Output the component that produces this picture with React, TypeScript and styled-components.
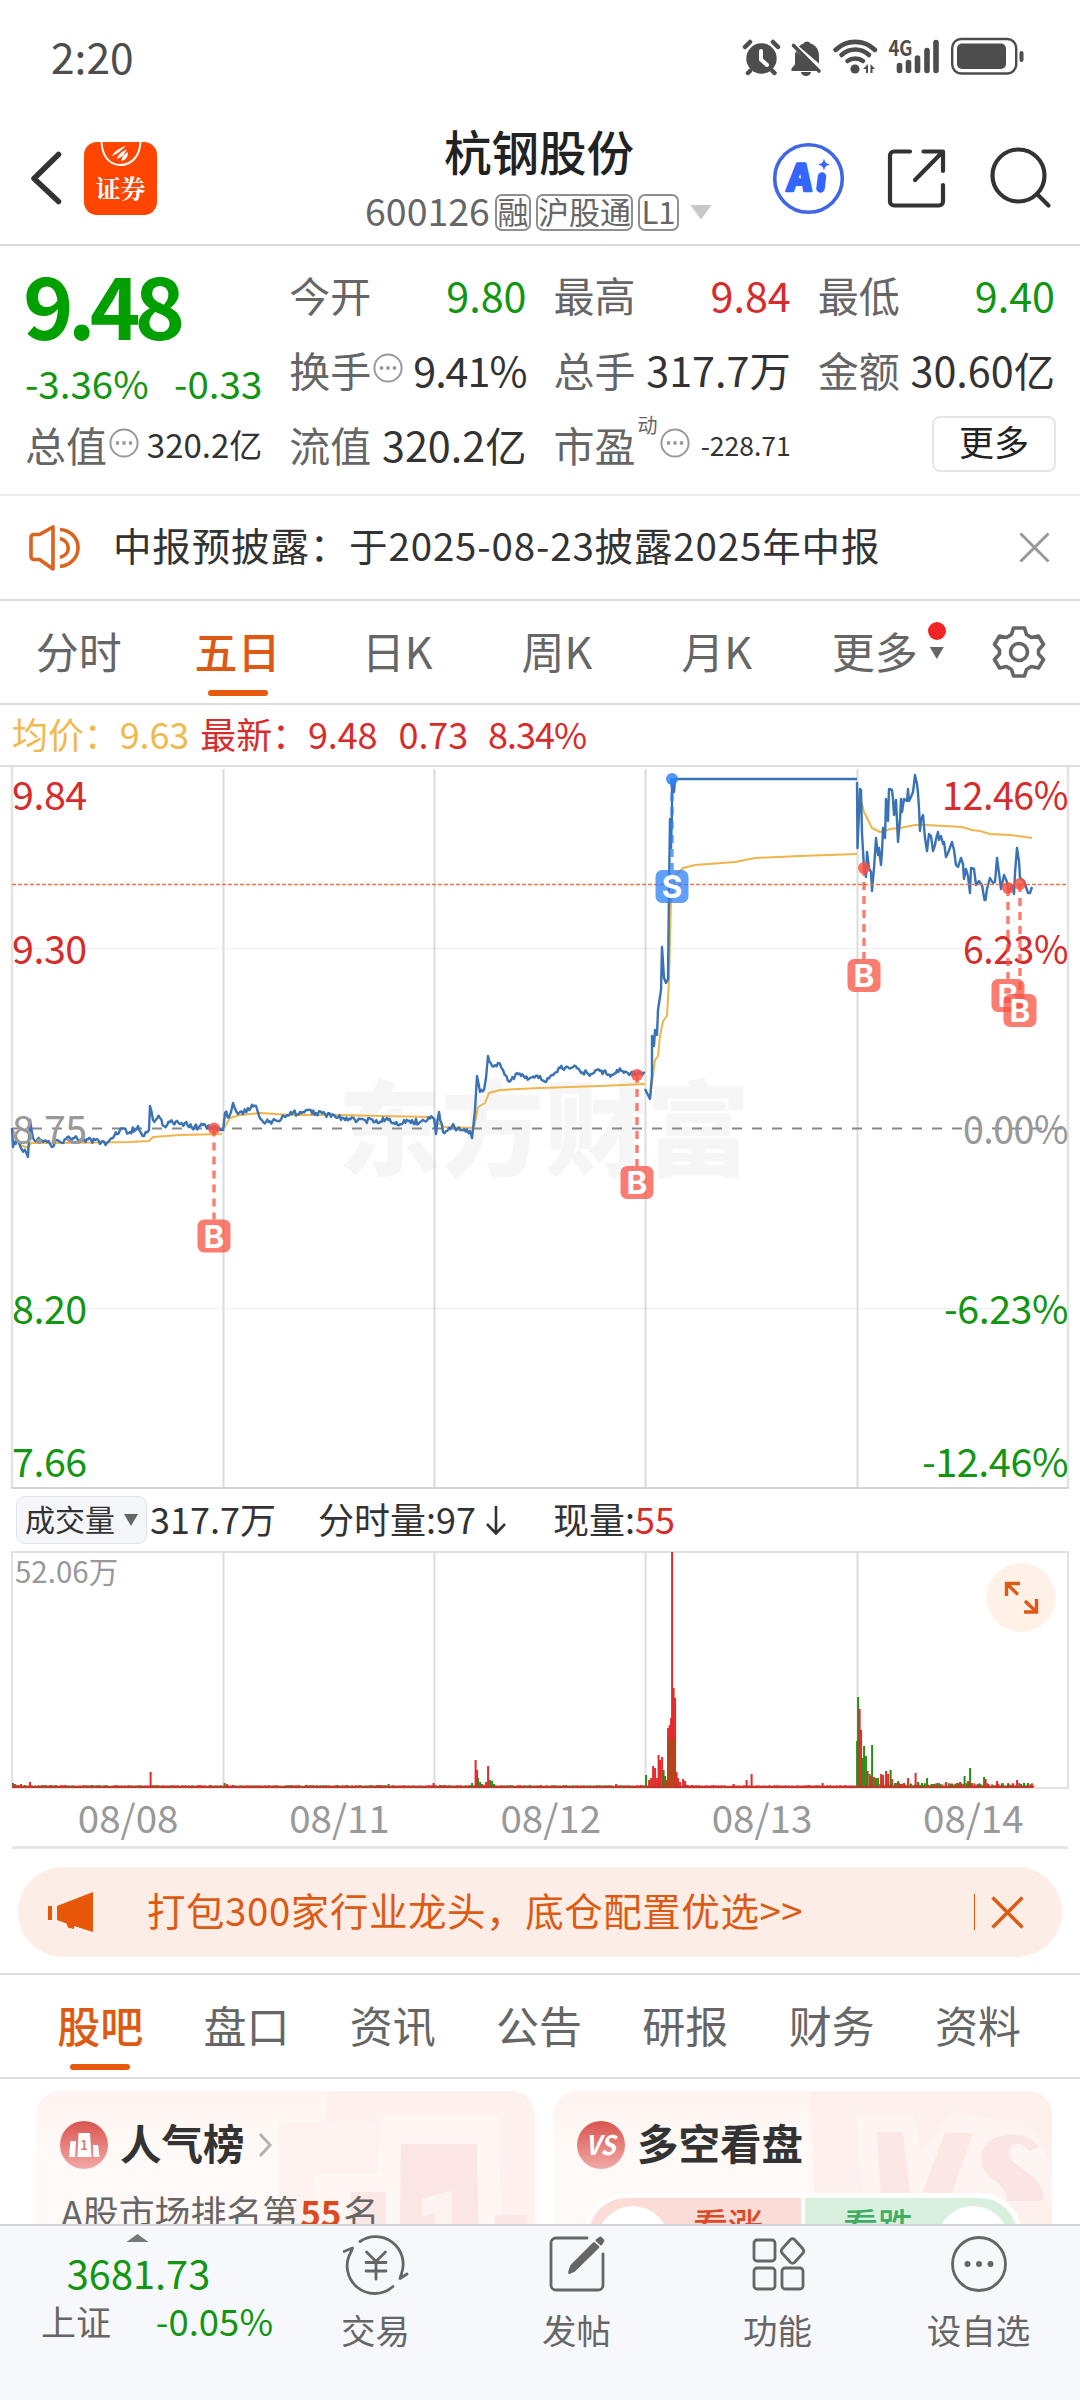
import React from "react";
import styled, { createGlobalStyle, css } from "styled-components";

const RED = "#d62c2c";
const GREEN = "#129612";
const ORANGE = "#dd5a14";
const DARK = "#333333";
const GRAY = "#666666";
const LIGHT = "#999999";

const FONT = `"Noto Sans CJK SC", "Noto Sans", sans-serif`;

const Global = createGlobalStyle`
  * { box-sizing: border-box; }
  body { margin: 0; background: #fff; }
  svg { display: block; flex: none; }
`;

const Screen = styled.div`
  width: 1080px;
  height: 2400px;
  overflow: hidden;
  display: flex;
  flex-direction: column;
  background: #fff;
  color: ${DARK};
  font-family: ${FONT};
  white-space: nowrap;
`;

/* ---------- status bar ---------- */

const StatusBar = styled.div`
  height: 115px;
  flex: none;
  display: flex;
  align-items: flex-start;
  justify-content: space-between;
  padding: 0 50px 0 51px;
`;

const Clock = styled.span`
  margin-top: 26px;
  font-size: 42.500px;
  line-height: 60px;
  color: #4d4d4d;
`;

const StatusIcons = () => (
  <svg width="300" height="115" viewBox="730 0 300 115" fill="#4d4d4d">
    <circle cx="761.5" cy="58.5" r="15.2" />
    <path d="M745 47l5-5M778 47l-5-5M750 71l-2 2M772.500 71l2 2" stroke="#4d4d4d" strokeWidth="4.500" strokeLinecap="round" />
    <path d="M761 51v8.500l6 5.500" stroke="#fff" strokeWidth="4" strokeLinecap="round" fill="none" />
    <path d="M796 51l23 20H791.500v-2.500l3.500-4v-8c0-2 .3-4 1-5.500zM799 46.500c1.500-1.600 3-2.600 4.500-3a4 4 0 0 1 7 0c6 1.800 8.500 7 8.500 12.500v7.500z" />
    <path d="M793.500 45.500L819 71" stroke="#4d4d4d" strokeWidth="3.600" strokeLinecap="round" />
    <path d="M801 72h10a5 4 0 0 1-10 0z" />
    <path d="M835.500 50a28 28 0 0 1 39.500 0M841.500 55a20 20 0 0 1 27.500 0M847.500 61a13 13 0 0 1 15.500 0" fill="none" stroke="#4d4d4d" strokeWidth="4.600" strokeLinecap="round" />
    <circle cx="855" cy="69" r="4.600" />
    <path d="M868 64v9h-2v-4h-3zM870.500 64l4.500 5h-2.500v4h-2z" />
    <g stroke="#4d4d4d" strokeWidth="5.600" strokeLinecap="round">
      <path d="M899.500 65.500v5M908.500 62.500v8M917.500 58v12.500M927 50.500v20M936 42.500v28" />
    </g>
    <text x="888.500" y="56" fontSize="21.500" fontWeight="700" textLength="24" lengthAdjust="spacingAndGlyphs" fontFamily={FONT}>4G</text>
    <rect x="952.200" y="39" width="64" height="34.500" rx="9" fill="none" stroke="#4d4d4d" strokeWidth="2.400" />
    <rect x="957" y="43.500" width="49" height="25.500" rx="5" />
    <rect x="1019.500" y="51" width="4" height="11" rx="2" />
  </svg>
);

/* ---------- title bar ---------- */

const Header = styled.header`
  height: 131px;
  flex: none;
  display: grid;
  grid-template-columns: 300px 1fr 300px;
  border-bottom: 2px solid #d9d9d9;
`;

const HeaderLeft = styled.div`
  display: flex;
  align-items: flex-start;
  padding: 27px 0 0 30px;
  gap: 21px;
`;

const BrokerLogo = styled.div`
  width: 73px;
  height: 73px;
  border-radius: 13px;
  background: #ff4500;
  color: #fff;
  display: flex;
  flex-direction: column;
  align-items: center;
  overflow: hidden;
`;

const BrokerName = styled.span`
  font-size: 25px;
  line-height: 36px;
  font-weight: 700;
  font-family: "Noto Serif CJK SC", ${FONT};
`;

const HeaderTitle = styled.div`
  display: flex;
  flex-direction: column;
  align-items: center;
`;

const StockName = styled.h1`
  margin: 5px 2px 0 0;
  font-size: 47.5px;
  line-height: 62px;
  font-weight: 500;
  color: #222;
`;

const CodeRow = styled.div`
  margin: 8px 3px 0 0;
  display: flex;
  align-items: center;
  height: 44px;
  gap: 5px;
  color: ${GRAY};
`;

const Code = styled.span`
  font-size: 37.5px;
  line-height: 44px;
  margin-top: -5px;
`;

const Tag = styled.span<{ $pad?: number }>`
  height: 37px;
  padding: 0 ${(p) => p.$pad ?? 0.5}px;
  border: 2px solid #8f8f8f;
  border-radius: 7px;
  font-size: 31px;
  line-height: 29px;
`;

const DownCaret = styled.span<{ $w: number; $h: number; $color: string; $up?: boolean }>`
  width: ${(p) => p.$w}px;
  height: ${(p) => p.$h}px;
  background: ${(p) => p.$color};
  clip-path: ${(p) => (p.$up ? "polygon(50% 0, 100% 100%, 0 100%)" : "polygon(0 0, 100% 0, 50% 100%)")};
`;

const CodeCaret = styled(DownCaret)`
  margin-left: 6px;
`;

const HeaderActions = styled.div`
  display: flex;
  justify-content: flex-end;
  padding: 24px 27px 0 0;
`;

const ActionIcons = () => (
  <svg width="284" height="80" viewBox="769 139 284 80" fill="none" stroke="#333" strokeWidth="4.200" strokeLinecap="round" strokeLinejoin="round">
    <circle cx="808.500" cy="178.500" r="33.800" stroke="#4066e6" strokeWidth="3.600" />
    <text transform="translate(786.500 190.500) skewX(-5)" fontSize="37" fontWeight="900" fill="#3366ff" stroke="#3366ff" strokeWidth="2.500" fontFamily={FONT}>A</text>
    <path d="M822 176.500l-1.500 12" stroke="#3366ff" strokeWidth="8.500" />
    <path d="M824 158.500c1 4 2 5 6 6-4 1-5 2-6 6-1-4-2-5-6-6 4-1 5-2 6-6z" fill="#3366ff" stroke="none" />
    <path d="M910 151.500h-16a4 4 0 0 0-4 4v46a4 4 0 0 0 4 4h45a4 4 0 0 0 4-4V185M923.500 151.500H943V171M942 152.500l-27 27.500" />
    <circle cx="1018.500" cy="175.500" r="26" />
    <path d="M1037 194l11.500 11.500" />
  </svg>
);

/* ---------- quote ---------- */

const Quote = styled.section`
  height: 250px;
  flex: none;
  padding: 13px 25px 0;
  display: grid;
  grid-template-columns: repeat(4, 1fr);
  grid-template-rows: repeat(3, 75px);
  column-gap: 27px;
  border-bottom: 2px solid #ececec;
`;

const PriceCell = styled.div`
  grid-row: span 2;
  display: flex;
  flex-direction: column;
  color: ${GREEN};
`;

const Price = styled.span`
  margin: 2px 0 0 -2px;
  font-size: 86px;
  line-height: 84px;
  font-weight: 700;
  letter-spacing: -6px;
  color: #00a000;
`;

const Changes = styled.div`
  margin-top: 8px;
  display: flex;
  justify-content: space-between;
  font-size: 38.500px;
  line-height: 58px;
`;

const Stat = styled.div`
  display: flex;
  align-items: center;
  height: 70px;
`;

const StatLabel = styled.span`
  font-size: 41px;
  color: ${GRAY};
`;

const StatValue = styled.span<{ $size?: number; $color?: string; $ls?: number }>`
  margin-left: auto;
  font-size: ${(p) => p.$size ?? 41.3}px;
  letter-spacing: ${(p) => p.$ls ?? 0}px;
  color: ${(p) => p.$color ?? DARK};
`;

const Super = styled.sup`
  align-self: flex-start;
  margin: -2px 0 0 2px;
  font-size: 20px;
  line-height: 36px;
  color: ${GRAY};
`;

const MoreButton = styled.button`
  margin-left: auto;
  width: 124px;
  height: 56px;
  margin-right: -1px;
  padding: 0 0 6px;
  border: 2px solid #e6e6e6;
  border-radius: 8px;
  background: #fff;
  font-family: inherit;
  font-size: 35px;
  line-height: 44px;
  color: #222;
`;

const InfoSvg = styled.svg`
  margin: -2px 0 0 2px;
`;

const InfoDots = () => (
  <InfoSvg width="30" height="30" viewBox="0 0 30 30">
    <circle cx="15" cy="15" r="13.600" fill="none" stroke="#999" strokeWidth="2" />
    <circle cx="8.500" cy="15" r="1.900" fill="#999" />
    <circle cx="15" cy="15" r="1.900" fill="#999" />
    <circle cx="21.500" cy="15" r="1.900" fill="#999" />
  </InfoSvg>
);

/* ---------- notice ---------- */

const Notice = styled.section`
  height: 105px;
  flex: none;
  display: flex;
  align-items: center;
  padding: 0 30px 0 29px;
  border-bottom: 2px solid #dcdcdc;
`;

const NoticeText = styled.span`
  margin: -7px auto 0 31px;
  font-size: 38.5px;
  letter-spacing: 0.85px;
`;

/* ---------- period tabs ---------- */

const Tabs = styled.nav<{ $pad: number }>`
  height: 104px;
  flex: none;
  display: flex;
  padding: 0 ${(p) => p.$pad}px;
  border-bottom: 2px solid #dcdcdc;
`;

const Tab = styled.div<{ $active?: boolean; $w: number }>`
  position: relative;
  width: ${(p) => p.$w}px;
  flex: none;
  display: flex;
  justify-content: center;
  font-size: 43px;
  line-height: 99px;
  color: ${(p) => (p.$active ? ORANGE : GRAY)};
  ${(p) =>
    p.$active &&
    css`
      font-weight: 500;
      &::after {
        content: "";
        position: absolute;
        left: calc(50% - 30px);
        bottom: 7px;
        width: 60px;
        height: 6px;
        border-radius: 3px;
        background: #e55a0c;
      }
    `}
`;

const MoreMark = styled.span`
  display: flex;
  flex-direction: column;
  align-items: center;
  width: 18px;
  margin-left: 10px;
  padding-top: 21px;
  gap: 7px;
`;

const RedDot = styled.i`
  width: 18px;
  height: 18px;
  border-radius: 50%;
  background: #f02424;
`;

const GearSvg = styled.svg`
  margin-top: 24px;
`;

const Gear = () => (
  <GearSvg width="54" height="54" viewBox="-27 -27 54 54" fill="none" stroke="#666" strokeWidth="3.600" strokeLinejoin="round">
    <path d="M-5.500-24h11l2 6.500 5 3 7-1.500 5 8.500-5 5.500v4l5 5.500-5 8.500-7-1.500-5 3-2 6.500h-11l-2-6.500-5-3-7 1.500-5-8.500 5-5.500v-4l-5-5.500 5-8.500 7 1.500 5-3z" />
    <circle r="8.500" />
  </GearSvg>
);

/* ---------- price chart ---------- */

const Legend = styled.div`
  height: 62px;
  flex: none;
  display: flex;
  align-items: center;
  padding: 0 0 4px 12px;
  font-size: 36px;
  color: ${RED};
  border-bottom: 2px solid #e0e0e0;
`;

const LegendItem = styled.span<{ $ml?: number; $color?: string; $ls?: number }>`
  margin-left: ${(p) => p.$ml ?? 0}px;
  letter-spacing: ${(p) => p.$ls ?? -0.1}px;
  color: ${(p) => p.$color ?? RED};
`;

type Pt = [number, number];

const seeded = (seed: number) => {
  let s = seed;
  return () => {
    s = (s * 16807) % 2147483647;
    return s / 2147483647;
  };
};

/* Fills each leg between two quotes with minute ticks. */
const ticks = (pts: Pt[], amp: number, seed: number): Pt[] => {
  const rnd = seeded(seed);
  const out: Pt[] = [pts[0]];
  for (let i = 1; i < pts.length; i++) {
    const [x0, y0] = pts[i - 1];
    const [x1, y1] = pts[i];
    const n = Math.floor((x1 - x0) / 1.3);
    for (let k = 1; k < n; k++) {
      const t = k / n;
      out.push([x0 + (x1 - x0) * t, y0 + (y1 - y0) * t + (rnd() - 0.5) * 2 * amp]);
    }
    out.push([x1, y1]);
  }
  return out;
};

const toPath = (pts: Pt[]) => "M" + pts.map(([x, y]) => `${x.toFixed(1)} ${y.toFixed(1)}`).join("L");

const PRICE_DAYS: { pts: Pt[]; amp: number }[] = [
  { amp: 3, pts: [[12, 1128], [13, 1147], [17, 1140], [22, 1150], [26, 1152], [28, 1157], [30, 1120], [33, 1138], [40, 1140], [50, 1144], [52, 1147], [57, 1140], [62, 1143], [70, 1138], [80, 1140], [95, 1140], [100, 1144], [107, 1143], [113, 1138], [120, 1130], [130, 1132], [138, 1126], [144, 1136], [149, 1130], [150, 1106], [153, 1120], [160, 1118], [164, 1126], [170, 1122], [180, 1124], [185, 1123], [192, 1128], [200, 1126], [214, 1127], [223, 1130]] },
  { amp: 2.8, pts: [[223, 1131], [225, 1113], [229, 1117], [231, 1112], [233, 1103], [238, 1114], [243, 1114], [248, 1108], [256, 1106], [259, 1116], [266, 1122], [278, 1121], [284, 1116], [292, 1114], [300, 1112], [308, 1110], [316, 1113], [325, 1114], [334, 1115], [345, 1120], [360, 1119], [375, 1122], [387, 1118], [395, 1124], [408, 1121], [420, 1122], [434, 1118]] },
  { amp: 2.6, pts: [[434, 1118], [436, 1134], [439, 1112], [443, 1132], [452, 1126], [460, 1130], [470, 1131], [472, 1138], [475, 1110], [477, 1076], [480, 1092], [484, 1090], [486, 1078], [488, 1056], [492, 1066], [498, 1063], [503, 1070], [508, 1081], [514, 1079], [517, 1073], [525, 1078], [540, 1076], [546, 1082], [552, 1075], [560, 1068], [573, 1067], [580, 1071], [591, 1074], [600, 1071], [613, 1075], [617, 1070], [628, 1073], [645, 1073]] },
  { amp: 0, pts: [[645, 1089], [650, 1099], [652, 1075], [652, 1036], [654, 1046], [655, 1030], [657, 1035], [658, 1010], [661, 990], [662, 947], [664, 978], [666, 983], [668, 979], [669, 890], [670, 819], [671, 848], [672, 810], [672, 779], [674, 792], [675, 779], [857, 779]] },
  { amp: 0, pts: [[857, 782], [857.5, 848], [860, 789], [861, 790], [862, 833], [864, 868], [866, 877], [867, 852], [869, 868], [871, 872], [872, 891], [874, 868], [876, 838], [878, 855], [879, 848], [881, 865], [882, 852], [883, 828], [885, 838], [886, 799], [888, 821], [889, 789], [892, 790], [893, 799], [894, 815], [896, 800], [898, 842], [900, 820], [901, 799], [902, 812], [904, 799], [907, 801], [908, 789], [909, 801], [911, 797], [913, 792], [914, 784], [915, 775], [917, 784], [918, 793], [919, 808], [920, 831], [921, 820], [923, 815], [925, 838], [927, 851], [929, 834], [931, 836], [933, 851], [935, 845], [936, 839], [938, 832], [939, 840], [941, 836], [943, 844], [944, 842], [946, 857], [948, 853], [952, 842], [954, 850], [956, 865], [958, 867], [961, 858], [963, 864], [964, 879], [966, 869], [968, 876], [970, 893], [971, 868], [974, 869], [976, 885], [979, 881], [982, 885], [984.500, 900], [985.500, 900], [987, 889], [990, 878], [993, 883], [995, 882], [997, 858], [999, 873], [1001, 889], [1004, 875], [1007, 882], [1009, 892], [1012, 885], [1014, 894], [1015, 873], [1017, 848], [1019, 861], [1020, 878], [1024, 881], [1028, 893], [1030, 893], [1032, 887]] },
];

const AVG_DAYS: Pt[][] = [
  [[12, 1128], [20, 1145], [28, 1148], [31, 1143], [60, 1143], [130, 1142], [149, 1141], [153, 1137], [180, 1135], [222, 1134]],
  [[224, 1128], [230, 1118], [240, 1115], [260, 1113], [290, 1115], [340, 1115], [380, 1116], [434, 1117]],
  [[434, 1118], [436, 1122], [445, 1127], [474, 1128], [478, 1107], [485, 1103], [489, 1093], [500, 1090], [540, 1088], [600, 1086], [645, 1084]],
  [[650, 1099], [653, 1075], [655, 1060], [658, 1056], [660, 1036], [663, 1021], [667, 1016], [669, 980], [671, 900], [675, 876], [683, 868], [695, 865], [735, 862], [755, 858], [800, 856], [857, 854]],
  [[859, 798], [862, 804], [864, 812], [868, 820], [872, 828], [880, 832], [885, 831], [890, 829], [900, 828], [915, 825], [925, 825], [945, 826], [962, 827], [972, 830], [980, 831], [990, 834], [1010, 835], [1032, 838]],
];

const DAY_X = [223.5, 434.5, 645.5, 857.5];

const TRADES: { x: number; y: number; side: "B" | "S"; drop: number }[] = [
  { x: 214, y: 1128.5, side: "B", drop: 91 },
  { x: 637, y: 1075, side: "B", drop: 91 },
  { x: 672, y: 779, side: "S", drop: 91 },
  { x: 864, y: 868, side: "B", drop: 91 },
  { x: 1008, y: 888, side: "B", drop: 91 },
  { x: 1020, y: 884, side: "B", drop: 110 },
];

const PriceChart = () => (
  <svg width="1080" height="722" viewBox="0 767 1080 722" fontFamily={FONT}>
    <text x="544" y="1168" fontSize="103" fontWeight="900" fill="#f6f6f6" textAnchor="middle">东方财富</text>
    <g stroke="#dcdcdc" strokeWidth="2">
      {DAY_X.map((x) => (
        <path key={x} d={`M${x} 769V1487`} />
      ))}
      <path d="M12 767V1488M1068 767V1488" strokeWidth="2.500" stroke="#e4e4e4" />
      <path d="M11 1488H1069" stroke="#d4d4d4" />
    </g>
    <path d="M12 948.500H1068M12 1308.500H1068" stroke="#d8d8d8" strokeWidth="1" strokeDasharray="1 1.500" />
    <path d="M12 1128.500H1068" stroke="#888" strokeWidth="2" strokeDasharray="10 10" />
    {AVG_DAYS.map((pts, i) => (
      <path key={i} d={toPath(pts)} fill="none" stroke="#f0b44c" strokeWidth="2" strokeLinejoin="round" />
    ))}
    {PRICE_DAYS.map((d, i) => (
      <path key={i} d={toPath(d.amp ? ticks(d.pts, d.amp, 97 + i * 31) : d.pts)} fill="none" stroke="#3a73b4" strokeWidth="2.400" strokeLinejoin="round" />
    ))}
    <path d="M12 884.500H1068" stroke="#dd7a50" strokeWidth="1.600" strokeDasharray="4 2" />
    <g fontSize="39.500" fill={RED} letterSpacing="-.5">
      <text x="12" y="810">9.84</text>
      <text x="12" y="964">9.30</text>
      <text x="12" y="1143.500" fill={LIGHT}>8.75</text>
      <text x="12" y="1323.500" fill={GREEN}>8.20</text>
      <text x="12" y="1477" fill={GREEN}>7.66</text>
      <g lengthAdjust="spacingAndGlyphs">
        <text x="942" y="810" textLength="126" lengthAdjust="spacingAndGlyphs">12.46%</text>
        <text x="963" y="964" textLength="105" lengthAdjust="spacingAndGlyphs">6.23%</text>
        <text x="963" y="1143.500" textLength="105" lengthAdjust="spacingAndGlyphs" fill={LIGHT}>0.00%</text>
        <text x="944" y="1323.500" textLength="124" lengthAdjust="spacingAndGlyphs" fill={GREEN}>-6.23%</text>
        <text x="922" y="1477" textLength="146" lengthAdjust="spacingAndGlyphs" fill={GREEN}>-12.46%</text>
      </g>
    </g>
    {TRADES.map((t) => {
      const c = t.side === "B" ? "#fa5040" : "#2b80f7";
      const top = t.y + t.drop;
      return (
        <g key={t.x}>
          <path d={`M${t.x} ${t.y}V${top}`} stroke={c} strokeOpacity=".75" strokeWidth="3.400" strokeDasharray="8 6" />
          <circle cx={t.x} cy={t.y} r="6" fill={c} fillOpacity=".82" />
          <rect x={t.x - 16.5} y={top} width="33" height="33" rx="6.500" fill={c} fillOpacity=".75" />
          <text x={t.x} y={top + 28} fontSize="31.500" fontWeight="700" fill="#fff" textAnchor="middle" fontFamily="Inter, sans-serif">{t.side}</text>
        </g>
      );
    })}
  </svg>
);

/* ---------- volume ---------- */

const VolumeHead = styled.div`
  height: 62px;
  flex: none;
  display: flex;
  align-items: center;
  padding-left: 16px;
  font-size: 36px;
  line-height: 50px;
`;

const Picker = styled.div`
  width: 131px;
  height: 48px;
  display: flex;
  align-items: center;
  justify-content: space-between;
  padding: 0 8px 0 8px;
  border: 1.500px solid #e0e3e8;
  border-radius: 9px;
  background: #f5f6f9;
  font-size: 30px;
  color: #222;
`;

const Lift = styled.span<{ $ml?: number; $color?: string }>`
  margin: -5px 0 0 ${(p) => p.$ml ?? 0}px;
  color: ${(p) => p.$color ?? DARK};
`;

const ArrowSvg = styled.svg`
  margin-left: 8px;
`;

const VR = "#e22a2a";
const VG = "#2a8c14";
const r = (x: number, h: number) => ({ x, h, c: VR });
const g = (x: number, h: number) => ({ x, h, c: VG });
const VOLUME = [
  g(13, 5), r(15, 4), g(18, 3), r(21, 4), g(25, 3), r(30, 6), r(50, 2), r(150.5, 16), g(156, 2),
  g(224.5, 5), r(227, 4), r(233, 3), r(248, 2), r(290.5, 3), r(306, 3), g(346, 2), r(378, 3), g(388.5, 4), r(433.500, 5), g(440, 3), r(445, 3), r(454, 2),
  g(472, 5), r(475.5, 28), r(477, 18), g(478, 10), g(480, 6), r(482, 4), r(486, 6), r(488, 22), g(490, 8), g(492, 7), g(494, 4), r(500, 2), g(507, 2), r(540.5, 3), g(566, 3), r(616, 4),
  r(641, 3), g(646, 13), r(649, 8), r(651, 10), r(653, 22), r(655, 20), r(657, 10), r(658.5, 33), r(660, 28), r(662, 31), g(663.5, 18), g(665, 12), r(666, 8),
  r(668, 60), r(669.5, 63), r(671, 70), r(672, 236), r(673.5, 100), r(675, 90), r(676.5, 16), r(678, 10), r(680, 6), r(683, 9), r(685, 7), r(687, 3), r(691, 2),
  r(733.500, 4), r(746.5, 8), r(751.5, 14), r(764, 2), r(822.5, 5),
  g(857, 47), g(858, 91), r(859.5, 79), r(861, 58), g(862.5, 30), g(864, 42), g(866, 32), r(867.5, 17), g(869.5, 14), r(871, 12), g(872, 43), r(874, 11), g(876, 10), g(878, 10), r(881, 14), r(883, 13), r(886, 17), r(888, 14), g(890.5, 18), r(892, 9), g(895, 5), g(898, 7), r(901, 4), r(904, 5), r(908, 10), g(911, 4), r(915.5, 15), g(918, 6), g(922, 5), g(927, 10), g(933, 4), r(946, 6), g(952, 4), r(957, 5), r(960, 6), g(964.5, 12), r(968, 7), g(970, 20), r(972, 5), g(978, 4), g(984, 11), r(985.500, 9), r(988, 4), r(997, 7), r(1003, 3), g(1008, 4), r(1013, 4), r(1017, 8), g(1021, 4), g(1024, 5), g(1028, 5), r(1031, 3),
];

const VolumeChart = () => {
  const rnd = seeded(11);
  const floor: { x: number; c: string; h: number }[] = [];
  for (let x = 12; x < 1033; x += 1.6) {
    const hot = x > 857 ? 4 : 1.8;
    floor.push({ x, h: 1.2 + rnd() * (hot - 1), c: rnd() < (x > 676 && x < 857 ? 0 : 0.4) ? VG : VR });
  }
  return (
    <svg width="1080" height="238" viewBox="0 1551 1080 238" fontFamily={FONT}>
      <g stroke="#dcdcdc" strokeWidth="2" fill="none">
        <path d="M12 1552H1068V1788H12z" stroke="#e2e2e2" />
        {DAY_X.map((x) => (
          <path key={x} d={`M${x} 1552V1787`} />
        ))}
      </g>
      {floor.map((b, i) => (
        <rect key={i} x={b.x} y={1787 - b.h} width="1.700" height={b.h} fill={b.c} />
      ))}
      {VOLUME.map((b, i) => (
        <rect key={i} x={b.x - 0.9} y={1788 - b.h} width="2" height={b.h} fill={b.c} />
      ))}
      <rect x="667" y="1739" width="8" height="48" fill="#b5461c" />
      <path d="M12 1787.200H1033.500" stroke="#c4342a" strokeWidth="1.800" />
      <text x="15" y="1582.500" fontSize="29.500" fill={LIGHT}>52.06万</text>
      <circle cx="1021" cy="1597.500" r="34.500" fill="#fff0e8" />
      <g fill="none" stroke={ORANGE} strokeWidth="3.400">
        <path d="M1006.500 1596V1583.500H1020M1007 1584L1018 1594.500M1024 1612H1036.500V1599M1036 1611.500L1025 1601" />
      </g>
    </svg>
  );
};

const Dates = styled.div`
  height: 60px;
  flex: none;
  width: 1056px;
  margin-left: 12px;
  padding-left: 10px;
  display: flex;
  overflow: hidden;
  border-bottom: 3px solid #e6e6e6;
  font-size: 38.5px;
  line-height: 54px;
  color: ${LIGHT};
`;

const DateLabel = styled.span`
  width: 211.300px;
  flex: none;
  padding-left: 1px;
  text-align: center;
`;

/* ---------- promo ---------- */

const PromoWrap = styled.div`
  height: 126px;
  flex: none;
  padding: 18px 18px 0;
  border-bottom: 2px solid #dcdcdc;
`;

const Promo = styled.div`
  height: 90px;
  border-radius: 45px;
  background: #fceee6;
  display: flex;
  align-items: center;
  padding: 0 38px 0 30px;
  color: ${ORANGE};
  font-size: 38.5px;
`;

const PromoText = styled.span`
  margin: -7px auto 0 53px;
  letter-spacing: 0.55px;
`;

const PromoRule = styled.i`
  width: 1.500px;
  height: 36px;
  margin-right: 16px;
  background: ${ORANGE};
`;

const Horn = () => (
  <svg width="46" height="42" viewBox="0 0 46 42" fill="#e85608">
    <path d="M0 15h4v14H0zM9 15L45 1v40l-19-6v3l-6-1.500-1.500-4L9 29z" />
  </svg>
);

const Cross = ({ size, color, w }: { size: number; color: string; w: number }) => (
  <svg width={size} height={size} viewBox={`0 0 ${size} ${size}`} stroke={color} strokeWidth={w}>
    <path d={`M1.500 1.500L${size - 1.5} ${size - 1.5}M${size - 1.5} 1.500L1.500 ${size - 1.5}`} />
  </svg>
);

/* ---------- cards ---------- */

const Cards = styled.section`
  height: 145px;
  flex: none;
  overflow: hidden;
  display: grid;
  grid-template-columns: 499px 499px;
  column-gap: 18px;
  padding: 12px 36px 0;
`;

const Card = styled.article`
  position: relative;
  height: 260px;
  border-radius: 24px;
  overflow: hidden;
  background: linear-gradient(180deg, #fef4f1 0, #fffaf7 60px);
`;

const CardArt = styled.svg`
  position: absolute;
  inset: 0;
`;

const CardTitle = styled.h2`
  position: relative;
  margin: 0;
  padding: 26px 0 0 24px;
  height: 82px;
  display: flex;
  align-items: center;
  gap: 13px;
  font-size: 41.500px;
  line-height: 56px;
  font-weight: 700;
`;

const CardName = styled.span`
  margin: -6px 0 0 -1px;
`;

const Rank = styled.p`
  position: relative;
  margin: 13px 0 0 25px;
  font-size: 35.900px;
  line-height: 50px;
  color: ${GRAY};
`;

const RankNo = styled.b`
  margin: 0 2px;
  font-size: 35px;
  color: #dc4a1c;
`;

const VotePill = styled.div`
  position: relative;
  margin: 20px 30px 0 31px;
  height: 84px;
  border: 5px solid #fff;
  border-radius: 46px;
  overflow: hidden;
  display: grid;
  grid-template-columns: 1fr 1fr;
  column-gap: 4px;
  background: #fff;
`;

const VoteHalf = styled.div<{ $up?: boolean }>`
  display: flex;
  flex-direction: ${(p) => (p.$up ? "row" : "row-reverse")};
  align-items: flex-start;
  padding: 8px;
  gap: 24px;
  font-size: 35px;
  font-weight: 500;
  line-height: 35px;
  color: ${(p) => (p.$up ? "#dc4a28" : "#3fae62")};
  background: ${(p) => (p.$up ? "#fcdcd7" : "#d9f0df")};
`;

const VoteFace = styled.i`
  width: 72px;
  height: 72px;
  border-radius: 50%;
  background: #fff;
  flex: none;
`;

const RankArt = () => (
  <CardArt width="499" height="260" viewBox="0 0 499 260">
    <path d="M290 0H499V200H285z" fill="#fef1ee" />
    <path d="M243 32H340V260H243z" fill="#fef3f0" />
    <path d="M278 82H342L345 24H463L468 260H276z" fill="#fef7f4" />
    <path d="M365 53H441L445 260H362z" fill="#fbe6e3" />
    <path d="M315 101H350V260H312zM459 124H491V260H459z" fill="#fbe8e5" />
    <path d="M386 108l30-9v60h-17v-37l-13 4z" fill="#fef3f0" />
  </CardArt>
);

const VsArt = () => (
  <CardArt width="499" height="260" viewBox="0 0 499 260">
    <path d="M257 0H499V260H268z" fill="#fef0ed" />
    <path d="M303 22H360L368 60 400 22 470 30Q499 60 499 90V110H310z" fill="#fef5f2" />
    <path d="M324 41H350L358 110H328zM392 42H420L396 110H366z" fill="#fbe7e4" />
    <path d="M486 56c-14-20-58-16-58 12 0 20 26 22 26 42h36c4-28-34-32-34-48 0-12 14-12 20-2z" fill="#fbe5e2" />
  </CardArt>
);

const CardBadge = ({ kind }: { kind: "rank" | "vs" }) => (
  <svg width="48" height="48" viewBox="0 0 48 48" fill="#fff">
    <defs>
      <linearGradient id={`badge-${kind}`} x2="0" y2="1">
        <stop offset="0" stopColor="#d9544f" />
        <stop offset="1" stopColor="#f2aaa6" />
      </linearGradient>
    </defs>
    <circle cx="24" cy="24" r="24" fill={`url(#badge-${kind})`} />
    {kind === "rank" ? (
      <>
        <path d="M10.500 20h5.500l-1 16H9zM18.500 12h11.500l1.500 24H17.500zM33 24h5l1.500 12H33.500z" />
        <text x="24" y="28.500" textAnchor="middle" fontSize="13" fontWeight="700" fill="#e07a76" fontFamily={FONT}>1</text>
      </>
    ) : (
      <text x="8.500" y="34" fontSize="27" fontWeight="700" fontStyle="italic" fontFamily={FONT} textLength="30" lengthAdjust="spacingAndGlyphs">VS</text>
    )}
  </svg>
);

/* ---------- bottom bar ---------- */

const BottomBar = styled.footer`
  flex: 1;
  display: grid;
  grid-template-columns: 275px repeat(4, 201px);
  background: #f7f8fb;
  border-top: 2px solid #d3d5d9;
`;

const IndexCell = styled.div`
  display: flex;
  flex-direction: column;
  align-items: center;
  padding-top: 8px;
  color: ${GREEN};
`;

const IndexValue = styled.span`
  margin: 2px 0 0 2px;
  font-size: 39.800px;
  line-height: 56px;
`;

const IndexRow = styled.div`
  width: 100%;
  margin-top: -2px;
  display: flex;
  justify-content: space-between;
  padding: 0 2px 0 41px;
  font-size: 36.500px;
  line-height: 46px;
`;

const IndexName = styled.span`
  font-size: 35px;
  color: ${GRAY};
`;

const NavItem = styled.div`
  display: flex;
  flex-direction: column;
  align-items: center;
  padding-top: 7px;
  font-size: 34.500px;
  line-height: 50px;
  color: ${GRAY};
  gap: 9px;
`;

const NavSvg = ({ children }: { children: React.ReactNode }) => (
  <svg width="66" height="62" viewBox="-33 -31 66 62" fill="none" stroke="#666" strokeWidth="2.800" strokeLinecap="round" strokeLinejoin="round">
    {children}
  </svg>
);

const TAB_W = 159.7;

export default function App() {
  return (
    <Screen>
      <Global />
      <StatusBar>
        <Clock>2:20</Clock>
        <StatusIcons />
      </StatusBar>

      <Header>
        <HeaderLeft>
          <svg width="33" height="73" viewBox="0 0 33 73" fill="none" stroke="#333" strokeWidth="5.500" strokeLinecap="round" strokeLinejoin="round">
            <path d="M28.500 12.500L4 36.500 28.500 59.500" />
          </svg>
          <BrokerLogo>
            <svg width="44" height="27" viewBox="0 0 44 27">
              <path d="M2.500-2c0 16 8 25 19 25s20-9 20-25" fill="none" stroke="#fff" strokeWidth="2" />
              <path d="M27 4c-7 2-12 6-14 10l6-3zM28 7c-6 3-9 6-10 10l6-3zM29 10c-4 2-6 5-7 9 5-1 7-4 7-9z" fill="#fff" />
            </svg>
            <BrokerName>证券</BrokerName>
          </BrokerLogo>
        </HeaderLeft>
        <HeaderTitle>
          <StockName>杭钢股份</StockName>
          <CodeRow>
            <Code>600126</Code>
            <Tag>融</Tag>
            <Tag $pad={0}>沪股通</Tag>
            <Tag $pad={1.5}>L1</Tag>
            <CodeCaret $w={22} $h={15} $color="#c8c8c8" />
          </CodeRow>
        </HeaderTitle>
        <HeaderActions>
          <ActionIcons />
        </HeaderActions>
      </Header>

      <Quote>
        <PriceCell>
          <Price>9.48</Price>
          <Changes>
            <span>-3.36%</span>
            <span>-0.33</span>
          </Changes>
        </PriceCell>
        <Stat><StatLabel>今开</StatLabel><StatValue $color={GREEN}>9.80</StatValue></Stat>
        <Stat><StatLabel>最高</StatLabel><StatValue $color={RED}>9.84</StatValue></Stat>
        <Stat><StatLabel>最低</StatLabel><StatValue $color={GREEN}>9.40</StatValue></Stat>
        <Stat><StatLabel>换手</StatLabel><InfoDots /><StatValue $ls={-1}>9.41%</StatValue></Stat>
        <Stat><StatLabel>总手</StatLabel><StatValue>317.7万</StatValue></Stat>
        <Stat><StatLabel>金额</StatLabel><StatValue>30.60亿</StatValue></Stat>
        <Stat><StatLabel>总值</StatLabel><InfoDots /><StatValue $size={33}>320.2亿</StatValue></Stat>
        <Stat><StatLabel>流值</StatLabel><StatValue>320.2亿</StatValue></Stat>
        <Stat><StatLabel>市盈</StatLabel><Super>动</Super><InfoDots /><StatValue $size={26.5}>-228.71</StatValue></Stat>
        <Stat><MoreButton>更多</MoreButton></Stat>
      </Quote>

      <Notice>
        <svg width="53" height="46" viewBox="0 0 53 46" fill="none" stroke="#d86420" strokeWidth="3.600" strokeLinejoin="round">
          <path d="M2 12.500a3 3 0 0 1 3-3h5.500L24 2v42L10.500 34.500H5a3 3 0 0 1-3-3z" />
          <path d="M31 4.500c24 2 24 34 0 37M31 13.500c11 3 11 16 0 19" />
        </svg>
        <NoticeText>中报预披露：于2025-08-23披露2025年中报</NoticeText>
        <Cross size={31} color="#999" w={3} />
      </Notice>

      <Tabs $pad={0}>
        <Tab $w={TAB_W - 2}>分时</Tab>
        <Tab $w={TAB_W} $active>五日</Tab>
        <Tab $w={TAB_W}>日K</Tab>
        <Tab $w={TAB_W}>周K</Tab>
        <Tab $w={TAB_W}>月K</Tab>
        <Tab $w={TAB_W + 25}>
          更多
          <MoreMark>
            <RedDot />
            <DownCaret $w={14} $h={12} $color="#666" />
          </MoreMark>
        </Tab>
        <Tab $w={75}><Gear /></Tab>
      </Tabs>

      <Legend>
        <LegendItem $color="#efb94e">均价：9.63</LegendItem>
        <LegendItem $ml={11}>最新：9.48</LegendItem>
        <LegendItem $ml={21}>0.73</LegendItem>
        <LegendItem $ml={20} $ls={-1}>8.34%</LegendItem>
      </Legend>

      <PriceChart />

      <VolumeHead>
        <Picker>
          <Lift>成交量</Lift>
          <DownCaret $w={14} $h={12} $color="#666" />
        </Picker>
        <Lift $ml={3}>317.7万</Lift>
        <Lift $ml={42}>分时量:97</Lift>
        <ArrowSvg width="24" height="30" viewBox="0 0 24 30" fill="none" stroke="#333" strokeWidth="2.600">
          <path d="M12 1V28M3 19L12 28.500 21 19" />
        </ArrowSvg>
        <Lift $ml={45}>现量:</Lift>
        <Lift $color={RED}>55</Lift>
      </VolumeHead>

      <VolumeChart />

      <Dates>
        <DateLabel>08/08</DateLabel>
        <DateLabel>08/11</DateLabel>
        <DateLabel>08/12</DateLabel>
        <DateLabel>08/13</DateLabel>
        <DateLabel>08/14</DateLabel>
      </Dates>

      <PromoWrap>
        <Promo>
          <Horn />
          <PromoText>打包300家行业龙头，底仓配置优选&gt;&gt;</PromoText>
          <PromoRule />
          <Cross size={33} color={ORANGE} w={3.4} />
        </Promo>
      </PromoWrap>

      <Tabs $pad={27}>
        {["股吧", "盘口", "资讯", "公告", "研报", "财务", "资料"].map((t, i) => (
          <Tab key={t} $w={146.3} $active={i === 0}>{t}</Tab>
        ))}
      </Tabs>

      <Cards>
        <Card>
          <RankArt />
          <CardTitle>
            <CardBadge kind="rank" />
            <CardName>人气榜</CardName>
            <svg width="14" height="26" viewBox="0 0 14 26" fill="none" stroke="#b3b3b3" strokeWidth="3">
              <path d="M2 2l10 11L2 24" />
            </svg>
          </CardTitle>
          <Rank>A股市场排名第<RankNo>55</RankNo>名</Rank>
        </Card>
        <Card>
          <VsArt />
          <CardTitle>
            <CardBadge kind="vs" />
            <CardName>多空看盘</CardName>
          </CardTitle>
          <VotePill>
            <VoteHalf $up><VoteFace />看涨</VoteHalf>
            <VoteHalf><VoteFace />看跌</VoteHalf>
          </VotePill>
        </Card>
      </Cards>

      <BottomBar>
        <IndexCell>
          <DownCaret $w={22} $h={8} $color="#777" $up />
          <IndexValue>3681.73</IndexValue>
          <IndexRow>
            <IndexName>上证</IndexName>
            <span>-0.05%</span>
          </IndexRow>
        </IndexCell>
        <NavItem>
          <NavSvg>
            <path d="M-16-22.500A27.500 27.500 0 0 1 25.500 9.500L24 14.500 31 10M17 22.500A27.500 27.500 0 0 1-25-12l1.500-4L-32-12.500" />
            <path d="M-9.500-12L0-2.500 9.500-12M-10-1.500H10M-10 7H10M0-2.500V15" />
          </NavSvg>
          交易
        </NavItem>
        <NavItem>
          <NavSvg>
            <path d="M10-26H-21a5 5 0 0 0-5 5V21a5 5 0 0 0 5 5H21a5 5 0 0 0 5-5V-10" />
            <path d="M-7.500 8.500L-5.500 2 17-20.500 21-17-3 6.500zM20-23.500L23.500-26 26-23.500 24-20z" fill="#666" />
          </NavSvg>
          发帖
        </NavItem>
        <NavItem>
          <NavSvg>
            <rect x="-24" y="-24" width="21" height="21" rx="3" />
            <rect x="-24" y="4" width="21" height="21" rx="3" />
            <rect x="4" y="4" width="21" height="21" rx="3" />
            <path d="M12.500-24.500q2-1.500 4 0l8.500 9.500q1.500 2 0 4l-8.500 9.500q-2 1.500-4 0L4-11q-1.500-2 0-4z" />
          </NavSvg>
          功能
        </NavItem>
        <NavItem>
          <NavSvg>
            <circle r="26.500" />
            <g fill="#666" stroke="none">
              <circle cx="-11.500" r="3" />
              <circle r="3" />
              <circle cx="11.500" r="3" />
            </g>
          </NavSvg>
          设自选
        </NavItem>
      </BottomBar>
    </Screen>
  );
}
